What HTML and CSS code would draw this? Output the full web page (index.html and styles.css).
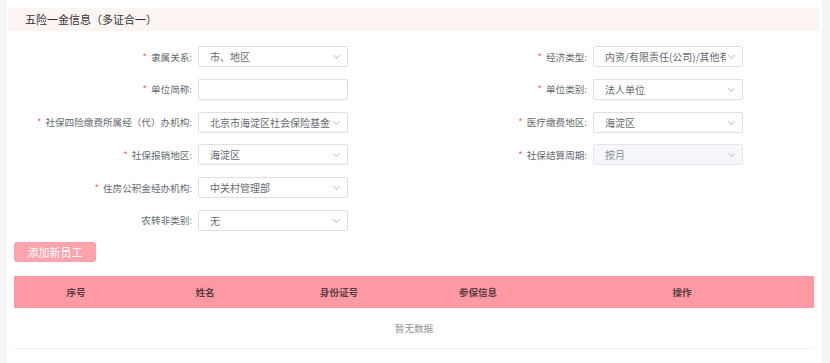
FILE: index.html
```html
<!DOCTYPE html>
<html lang="zh-CN">
<head>
  <meta charset="UTF-8" />
  <title>五险一金信息</title>
  <link rel="stylesheet" href="styles.css">
</head>
<body>

  <div class="card">
    <!-- 标题 -->
    <div class="section-title">五险一金信息（多证合一）</div>

    <!-- 表单 -->
    <div class="form">
      <div class="form-col">
        <div class="form-item">
          <label class="required">隶属关系:</label>
          <div class="select"><span>市、地区</span><i class="arrow"></i></div>
        </div>
        <div class="form-item">
          <label class="required">单位简称:</label>
          <div class="input"></div>
        </div>
        <div class="form-item">
          <label class="required">社保四险缴费所属经（代）办机构:</label>
          <div class="select"><span>北京市海淀区社会保险基金管理中心</span><i class="arrow"></i></div>
        </div>
        <div class="form-item">
          <label class="required">社保报销地区:</label>
          <div class="select"><span>海淀区</span><i class="arrow"></i></div>
        </div>
        <div class="form-item">
          <label class="required">住房公积金经办机构:</label>
          <div class="select"><span>中关村管理部</span><i class="arrow"></i></div>
        </div>
        <div class="form-item">
          <label>农转非类别:</label>
          <div class="select"><span>无</span><i class="arrow"></i></div>
        </div>
      </div>

      <div class="form-col">
        <div class="form-item">
          <label class="required">经济类型:</label>
          <div class="select"><span>内资/有限责任(公司)/其他有限责任(公司)</span><i class="arrow"></i></div>
        </div>
        <div class="form-item">
          <label class="required">单位类别:</label>
          <div class="select"><span>法人单位</span><i class="arrow"></i></div>
        </div>
        <div class="form-item">
          <label class="required">医疗缴费地区:</label>
          <div class="select"><span>海淀区</span><i class="arrow"></i></div>
        </div>
        <div class="form-item">
          <label class="required">社保结算周期:</label>
          <div class="select disabled"><span>按月</span><i class="arrow"></i></div>
        </div>
      </div>
    </div>

    <button class="add-btn">添加新员工</button>

    <!-- 员工列表 -->
    <table class="staff-table">
      <colgroup>
        <col style="width: 124px">
        <col style="width: 134px">
        <col style="width: 134px">
        <col style="width: 144px">
        <col>
      </colgroup>
      <thead>
        <tr>
          <th>序号</th>
          <th>姓名</th>
          <th>身份证号</th>
          <th>参保信息</th>
          <th>操作</th>
        </tr>
      </thead>
      <tbody>
        <tr>
          <td class="empty" colspan="5">暂无数据</td>
        </tr>
      </tbody>
    </table>
  </div>

</body>
</html>
```

FILE: styles.css
```css
body {
  margin: 0;
  background: #f5f5f6;
  font-family: "Noto Sans CJK SC", "Noto Sans", sans-serif;
  color: #606266;
  height: 363px;
  overflow: hidden;
}

.card {
  margin-left: 7px;
  width: 815px;
  height: 363px;
  background: #fff;
  box-sizing: border-box;
  padding-top: 8px;
}

.section-title {
  margin: 0 3px 0 1px;
  height: 23px;
  line-height: 23px;
  padding-left: 17px;
  background: #fdf4f4;
  font-size: 11px;
  color: #333;
}

/* 表单 */
.form {
  display: grid;
  grid-template-columns: 395px 395px;
  padding: 15px 0 0 13px;
}

.form-col {
  display: flex;
  flex-direction: column;
  gap: 11.8px;
}

.form-item {
  display: flex;
  align-items: center;
  height: 21px;
}

.form-item label {
  width: 178px;
  padding-right: 6px;
  box-sizing: border-box;
  text-align: right;
  font-size: 9.6px;
  color: #666a70;
  white-space: nowrap;
}

.form-item label.required::before {
  content: "*";
  color: #f56c6c;
  margin-right: 4px;
}

.input,
.select {
  position: relative;
  width: 150px;
  height: 21px;
  box-sizing: border-box;
  border: 1px solid #dcdfe6;
  border-radius: 2px;
  background: #fff;
}

.select span {
  display: block;
  margin: 0 16px 0 11px;
  line-height: 19px;
  font-size: 10px;
  color: #666a70;
  white-space: nowrap;
  overflow: hidden;
}

.select .arrow {
  position: absolute;
  right: 8px;
  top: 6px;
  width: 4px;
  height: 4px;
  border-right: 1px solid #c8cbd2;
  border-bottom: 1px solid #c8cbd2;
  transform: rotate(45deg);
}

.select.disabled {
  background: #f5f7fa;
  border-color: #e4e7ed;
}

.select.disabled span {
  color: #8a8d93;
}

/* 按钮 */
.add-btn {
  display: block;
  margin: 11px 0 0 7px;
  width: 82px;
  height: 20px;
  padding: 0;
  border: none;
  border-radius: 3px;
  background: #ffa3ad;
  color: #fff;
  font-family: inherit;
  font-size: 11px;
}

/* 表格 */
.staff-table {
  margin: 14px 0 0 7px;
  width: 800px;
  border-collapse: collapse;
  table-layout: fixed;
}

.staff-table th {
  height: 32px;
  padding: 0;
  background: #ff9aa5;
  color: #5a3c41;
  font-size: 9.6px;
  font-weight: bold;
}

.staff-table td.empty {
  height: 40px;
  padding: 0;
  text-align: center;
  font-size: 9.6px;
  color: #909399;
  border-bottom: 1px solid #eff0f3;
}
```
